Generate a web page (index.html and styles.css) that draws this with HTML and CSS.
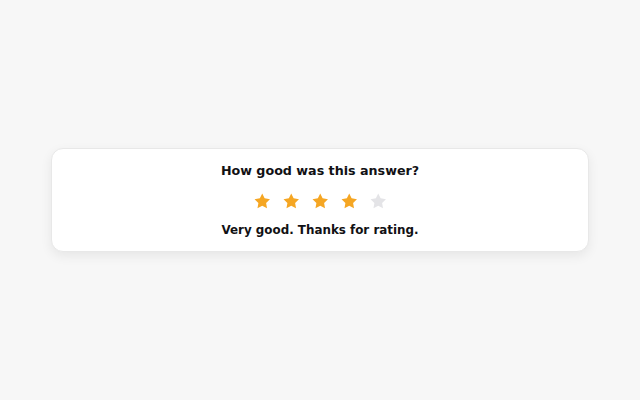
FILE: index.html
```html
<!DOCTYPE html>
<html lang="en">
<head>
<meta charset="utf-8">
<title>Rating</title>
<link rel="stylesheet" href="styles.css">
</head>
<body>
<main class="page">
  <section class="card">
    <h2 class="title">How good was this answer?</h2>
    <div class="stars" role="img" aria-label="4 out of 5 stars">
      <svg class="star on" viewBox="0 0 24 24"><path d="M12 2l3.09 6.26L22 9.27l-5 4.87 1.18 6.88L12 17.77l-6.18 3.25L7 14.14 2 9.27l6.91-1.01L12 2z"/></svg>
      <svg class="star on" viewBox="0 0 24 24"><path d="M12 2l3.09 6.26L22 9.27l-5 4.87 1.18 6.88L12 17.77l-6.18 3.25L7 14.14 2 9.27l6.91-1.01L12 2z"/></svg>
      <svg class="star on" viewBox="0 0 24 24"><path d="M12 2l3.09 6.26L22 9.27l-5 4.87 1.18 6.88L12 17.77l-6.18 3.25L7 14.14 2 9.27l6.91-1.01L12 2z"/></svg>
      <svg class="star on" viewBox="0 0 24 24"><path d="M12 2l3.09 6.26L22 9.27l-5 4.87 1.18 6.88L12 17.77l-6.18 3.25L7 14.14 2 9.27l6.91-1.01L12 2z"/></svg>
      <svg class="star off" viewBox="0 0 24 24"><path d="M12 2l3.09 6.26L22 9.27l-5 4.87 1.18 6.88L12 17.77l-6.18 3.25L7 14.14 2 9.27l6.91-1.01L12 2z"/></svg>
    </div>
    <p class="message">Very good. Thanks for rating.</p>
  </section>
</main>
</body>
</html>
```
FILE: styles.css
```css
html, body {
  margin: 0;
  padding: 0;
  height: 100%;
}
body {
  background: #f7f7f7;
  font-family: "DejaVu Sans", "Liberation Sans", sans-serif;
  color: #111114;
}
.page {
  height: 400px;
  display: flex;
  align-items: center;
  justify-content: center;
}
.card {
  box-sizing: border-box;
  width: 538px;
  height: 104px;
  background: #ffffff;
  border: 1px solid #e8e8e8;
  border-radius: 12px;
  box-shadow: 0 4px 12px rgba(0, 0, 0, 0.07);
  padding: 12px 20px;
  display: flex;
  flex-direction: column;
  align-items: center;
}
.title {
  margin: 0;
  font-size: 12.7px;
  font-weight: 700;
  line-height: 20px;
}
.stars {
  margin-top: 11px;
  display: flex;
  gap: 10.5px;
}
.star {
  width: 18.5px;
  height: 18.5px;
  display: block;
}
.star.on { fill: #f5a623; }
.star.off { fill: #e4e4e7; }
.message {
  margin: 9.5px 0 0;
  font-size: 11.9px;
  font-weight: 700;
  line-height: 20px;
}
```
